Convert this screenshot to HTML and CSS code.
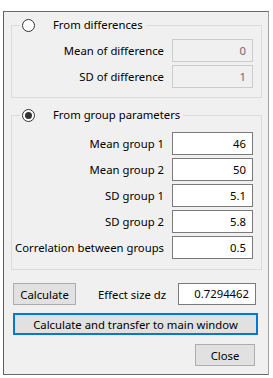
FILE: index.html
```html
<!DOCTYPE html>
<html lang="en">
<head>
    <meta charset="UTF-8">
    <meta name="viewport" content="width=device-width, initial-scale=1.0">
    <title>Effect size dz</title>
    <link rel="stylesheet" href="styles.css">
</head>
<body>
    <div class="window">
        <fieldset class="group first">
            <legend><span class="radio"></span><span class="legend-text">From differences</span></legend>
            <div class="row">
                <label>Mean of difference</label>
                <input type="text" class="field" value="0" disabled>
            </div>
            <div class="row">
                <label>SD of difference</label>
                <input type="text" class="field" value="1" disabled>
            </div>
        </fieldset>

        <fieldset class="group second">
            <legend><span class="radio checked"></span><span class="legend-text">From group parameters</span></legend>
            <div class="row">
                <label>Mean group 1</label>
                <input type="text" class="field" value="46">
            </div>
            <div class="row">
                <label>Mean group 2</label>
                <input type="text" class="field" value="50">
            </div>
            <div class="row">
                <label>SD group 1</label>
                <input type="text" class="field" value="5.1">
            </div>
            <div class="row">
                <label>SD group 2</label>
                <input type="text" class="field" value="5.8">
            </div>
            <div class="row">
                <label>Correlation between groups</label>
                <input type="text" class="field" value="0.5">
            </div>
        </fieldset>

        <div class="actions">
            <div class="result-row">
                <button class="btn calc">Calculate</button>
                <span class="result-label">Effect size dz</span>
                <div class="output">0.7294462</div>
            </div>
            <button class="btn transfer">Calculate and transfer to main window</button>
            <div class="close-row">
                <button class="btn close">Close</button>
            </div>
        </div>
    </div>
</body>
</html>
```

FILE: styles.css
```css
body {
    margin: 0;
    background: #ffffff;
    font-family: "Noto Sans", "Open Sans", sans-serif;
    font-size: 11.3px;
    color: #000000;
}
.window {
    margin: 11px 0 0 3px;
    width: 266px;
    height: 364px;
    box-sizing: border-box;
    background: #f0f0f0;
    border-left: 1px solid #5f5f5f;
    border-top: 1px solid #6a6a6a;
    border-right: 1px solid #a0a0a0;
    border-bottom: 1px solid #6a6a6a;
}
.group {
    width: 251px;
    box-sizing: border-box;
    margin: 0 0 0 7px;
    border: 1px solid #dcdcdc;
    padding: 0 8px 9px 2px;
    min-width: 0;
}
.group.first {
    margin-top: 5px;
    padding-top: 6px;
}
.group.second {
    margin-top: 9px;
    padding-top: 9px;
    padding-bottom: 10px;
}
.group legend {
    display: flex;
    align-items: center;
    margin-left: 6px;
    padding: 0 3px 0 2px;
    height: 16px;
    line-height: 16px;
}
.radio {
    width: 13px;
    height: 13px;
    box-sizing: border-box;
    border: 1px solid #333333;
    border-radius: 50%;
    background: #ffffff;
    display: flex;
    align-items: center;
    justify-content: center;
}
.radio.checked::after {
    content: "";
    width: 7px;
    height: 7px;
    border-radius: 50%;
    background: #333333;
}
.legend-text {
    margin-left: 18px;
}
.row {
    display: flex;
    justify-content: flex-end;
    align-items: center;
    gap: 8px;
    height: 23px;
    margin-bottom: 3px;
}
.row:last-child {
    margin-bottom: 0;
}
.row label {
    white-space: nowrap;
    flex-shrink: 0;
}
.field {
    width: 81px;
    height: 23px;
    box-sizing: border-box;
    border: 1px solid #7a7a7a;
    background: #ffffff;
    font-family: inherit;
    font-size: 11.3px;
    text-align: right;
    padding: 0 6px 0 2px;
    color: #000000;
    margin: 0;
}
.field:disabled {
    background: #f0f0f0;
    border-color: #cccccc;
    color: #6d6d6d;
}
.actions {
    margin: 13px 0 0 9px;
    width: 245px;
}
.result-row {
    display: flex;
    align-items: center;
    height: 22px;
}
.btn {
    font-family: inherit;
    font-size: 11.3px;
    background: #e1e1e1;
    border: 1px solid #adadad;
    color: #000000;
    height: 22px;
    padding: 0;
    margin: 0;
}
.calc {
    width: 63px;
}
.result-label {
    margin-left: 22px;
}
.output {
    margin-left: auto;
    margin-right: 2px;
    width: 78px;
    height: 22px;
    box-sizing: border-box;
    border: 1px solid #7a7a7a;
    background: #ffffff;
    text-align: right;
    line-height: 20px;
    padding-right: 6px;
}
.transfer {
    display: block;
    width: 245px;
    margin-top: 8px;
    border: 2px solid #0078d7;
}
.close-row {
    display: flex;
    justify-content: flex-end;
    margin-top: 9px;
}
.close {
    width: 60px;
    margin-right: 3px;
}
```
